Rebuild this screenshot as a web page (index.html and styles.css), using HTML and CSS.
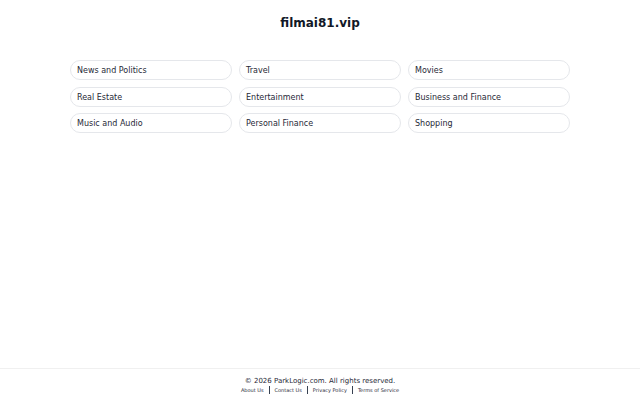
FILE: index.html
```html
<!DOCTYPE html>
<html lang="en">
<head>
<meta charset="utf-8">
<title>filmai81.vip</title>
<link rel="stylesheet" href="styles.css">
</head>
<body>
<div class="page">
  <main class="main">
    <h1 class="title">filmai81.vip</h1>
    <div class="grid">
      <a class="pill" href="#">News and Politics</a>
      <a class="pill" href="#">Travel</a>
      <a class="pill" href="#">Movies</a>
      <a class="pill" href="#">Real Estate</a>
      <a class="pill" href="#">Entertainment</a>
      <a class="pill" href="#">Business and Finance</a>
      <a class="pill" href="#">Music and Audio</a>
      <a class="pill" href="#">Personal Finance</a>
      <a class="pill" href="#">Shopping</a>
    </div>
  </main>
  <footer class="footer">
    <div class="copy">© 2026 ParkLogic.com. All rights reserved.</div>
    <div class="links">
      <a href="#">About Us</a><span class="sep"></span>
      <a href="#">Contact Us</a><span class="sep"></span>
      <a href="#">Privacy Policy</a><span class="sep"></span>
      <a href="#">Terms of Service</a>
    </div>
  </footer>
</div>
</body>
</html>
```
FILE: styles.css
```css
* { box-sizing: border-box; }
html, body { margin: 0; padding: 0; }
body {
  font-family: "DejaVu Sans", sans-serif;
  color: #1f2937;
  background: #fff;
}
.page {
  min-height: 400px;
  display: flex;
  flex-direction: column;
}
.main {
  flex: 1;
  width: 500px;
  margin: 0 auto;
  padding-top: 16px;
}
.title {
  margin: 0;
  text-align: center;
  font-size: 12px;
  font-weight: bold;
  line-height: 14px;
  color: #111827;
}
.grid {
  margin-top: 30px;
  display: grid;
  grid-template-columns: repeat(3, 1fr);
  column-gap: 7px;
  row-gap: 6.5px;
}
.pill {
  display: block;
  height: 20px;
  line-height: 18px;
  padding: 1px 6px 0;
  border: 1px solid #e5e7eb;
  border-radius: 10px;
  font-size: 8px;
  color: #1f2937;
  text-decoration: none;
}
.footer {
  border-top: 1px solid #f0f0f0;
  padding: 8px 0 6px;
  text-align: center;
}
.copy {
  font-size: 7px;
  line-height: 9px;
  color: #1f2937;
}
.links {
  font-size: 5px;
  line-height: 8px;
  display: flex;
  justify-content: center;
  align-items: center;
}
.links a {
  color: #1f2937;
  text-decoration: none;
}
.sep {
  display: inline-block;
  width: 1px;
  height: 8px;
  background: #374151;
  margin: 0 5px;
}
```
